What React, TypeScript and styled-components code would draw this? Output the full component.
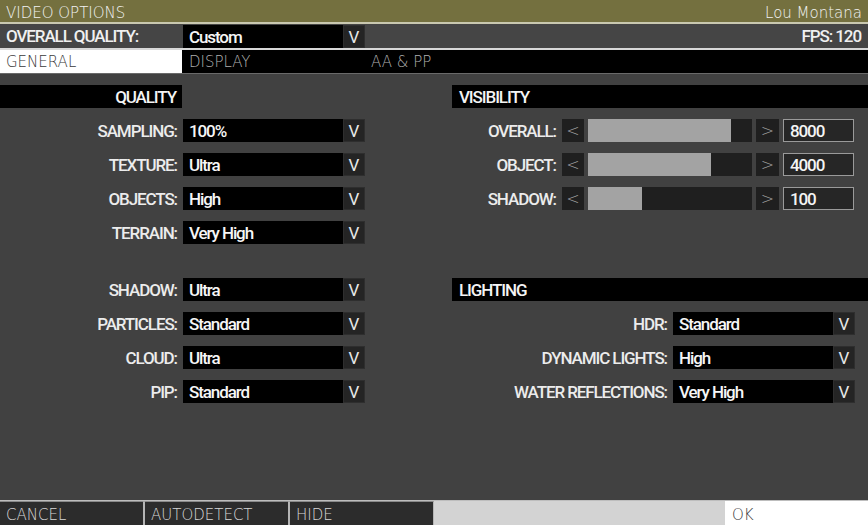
import React from "react";
import styled, { createGlobalStyle } from "styled-components";

const Global = createGlobalStyle`
  html, body { margin: 0; padding: 0; background: #404040; }
  body { font-family: "Roboto", "Liberation Sans", sans-serif; }
  * { box-sizing: border-box; }
`;

const thin = `"DejaVu Sans", "Liberation Sans", sans-serif`;
const cond = `"Roboto", "Liberation Sans", sans-serif`;

const labelFont = `
  font-family: ${cond};
  font-weight: 500;
  font-size: 17px;
  letter-spacing: -1.1px;
`;

const Screen = styled.div`
  width: 868px;
  height: 525px;
  display: flex;
  flex-direction: column;
  background: #414141;
  overflow: hidden;
`;

const TitleBar = styled.div`
  height: 24px;
  background: #74703f;
  border-bottom: 2px solid #c9c8b0;
  display: flex;
  align-items: center;
  justify-content: space-between;
  padding: 3px 6px 0 6px;
  font-family: ${thin};
  font-weight: 200;
  font-size: 15px;
  color: #f2f2f2;
`;

const QualityBar = styled.div`
  height: 26px;
  background: #454545;
  border-bottom: 2px solid #d8d8d8;
  display: flex;
  align-items: center;
`;

const BarLabel = styled.div`
  width: 183px;
  padding-left: 6px;
  ${labelFont}
  color: #f0f0f0;
`;

const Fps = styled.div`
  margin-left: auto;
  padding-right: 7px;
  ${labelFont}
  color: #f0f0f0;
`;

const Tabs = styled.div`
  height: 24px;
  background: #000;
  border-bottom: 1px solid #6a6a6a;
  display: flex;
`;

const Tab = styled.div<{ $active?: boolean; $w: number }>`
  width: ${(p) => p.$w}px;
  height: 100%;
  display: flex;
  align-items: center;
  padding: 1px 0 0 ${(p) => (p.$active ? 6 : 7)}px;
  background: ${(p) => (p.$active ? "#ffffff" : "#000000")};
  color: ${(p) => (p.$active ? "#3a3a3a" : "#b0b0b0")};
  font-family: ${thin};
  font-weight: 200;
  font-size: 15px;
`;

const Content = styled.div`
  flex: 1;
  display: flex;
  padding-top: 11px;
`;

const LeftCol = styled.div`
  width: 365px;
  display: flex;
  flex-direction: column;
`;

const RightCol = styled.div`
  margin-left: 87px;
  flex: 1;
  display: flex;
  flex-direction: column;
`;

const Section = styled.div<{ $top?: number }>`
  display: flex;
  flex-direction: column;
  gap: 11px;
  margin-top: ${(p) => p.$top ?? 0}px;
`;

const Header = styled.div<{ $align: "left" | "right"; $w?: number }>`
  height: 23px;
  width: ${(p) => (p.$w ? `${p.$w}px` : "100%")};
  background: #000;
  display: flex;
  align-items: center;
  justify-content: ${(p) => (p.$align === "right" ? "flex-end" : "flex-start")};
  padding: 1px 6px 0 7px;
  ${labelFont}
  color: #f4f4f4;
`;

const Row = styled.div<{ $labelW: number }>`
  height: 23px;
  display: grid;
  grid-template-columns: ${(p) => p.$labelW}px auto;
  column-gap: 6px;
  align-items: center;
`;

const SliderRowGrid = styled.div`
  height: 23px;
  display: grid;
  grid-template-columns: 106px 22px 164px 23px 71px;
  column-gap: 4px;
  align-items: stretch;
  & > :first-child {
    margin-right: 2px;
  }
`;

const Label = styled.div`
  text-align: right;
  align-self: center;
  padding-top: 1px;
  ${labelFont}
  color: #ececec;
  white-space: nowrap;
`;

const SelectBox = styled.div`
  width: 182px;
  height: 23px;
  display: flex;
`;

const SelectValue = styled.div`
  flex: 1;
  background: #000;
  display: flex;
  align-items: center;
  padding: 1px 0 0 6px;
  ${labelFont}
  color: #f6f6f6;
`;

const SelectArrow = styled.div`
  width: 22px;
  background: #242424;
  border: 1px solid #2e2e2e;
  display: flex;
  align-items: center;
  justify-content: center;
  padding-top: 1px;
  font-family: ${cond};
  font-weight: 400;
  font-size: 17px;
  color: #e8e8e8;
`;

const StepBtn = styled.div`
  background: #1f1f1f;
  display: flex;
  align-items: center;
  justify-content: center;
  font-family: ${thin};
  font-weight: 200;
  font-size: 16px;
  color: #a8a8a8;
`;

const Track = styled.div`
  background: #1f1f1f;
  display: flex;
`;

const Fill = styled.div`
  background: #a3a3a3;
  height: 100%;
`;

const ValueBox = styled.div`
  border: 1px solid #9a9a9a;
  background: #262626;
  display: flex;
  align-items: center;
  padding: 1px 0 0 6px;
  ${labelFont}
  color: #f4f4f4;
`;

const Footer = styled.div`
  height: 25px;
  display: flex;
  border-top: 1px solid #bdbdbd;
`;

const FootBtn = styled.div<{ $w: number; $first?: boolean }>`
  width: ${(p) => p.$w}px;
  background: #2c2c2c;
  border-left: ${(p) => (p.$first ? "none" : "1px solid #b5b5b5")};
  border-right: 1px solid #b5b5b5;
  border-top: 1px solid #8a8a8a;
  display: flex;
  align-items: center;
  padding: 3px 0 0 6px;
  font-family: ${thin};
  font-weight: 200;
  font-size: 15px;
  color: #d8d8d8;
`;

const FootFill = styled.div`
  flex: 1;
  background: #d3d3d3;
`;

const OkBtn = styled.div`
  width: 143px;
  background: #ffffff;
  display: flex;
  align-items: center;
  padding: 3px 0 0 7px;
  font-family: ${thin};
  font-weight: 200;
  font-size: 15px;
  color: #333;
`;

const Select = ({ value }: { value: string }) => (
  <SelectBox>
    <SelectValue>{value}</SelectValue>
    <SelectArrow>V</SelectArrow>
  </SelectBox>
);

const SelectRow = ({ label, value, labelW }: { label: string; value: string; labelW: number }) => (
  <Row $labelW={labelW}>
    <Label>{label}</Label>
    <Select value={value} />
  </Row>
);

const SliderRow = ({ label, pct, value }: { label: string; pct: number; value: string }) => (
  <SliderRowGrid>
    <Label>{label}</Label>
    <StepBtn>&lt;</StepBtn>
    <Track>
      <Fill style={{ width: `${pct}%` }} />
    </Track>
    <StepBtn>&gt;</StepBtn>
    <ValueBox>{value}</ValueBox>
  </SliderRowGrid>
);

export default function App() {
  return (
    <Screen>
      <Global />
      <TitleBar>
        <span>VIDEO OPTIONS</span>
        <span>Lou Montana</span>
      </TitleBar>
      <QualityBar>
        <BarLabel>OVERALL QUALITY:</BarLabel>
        <Select value="Custom" />
        <Fps>FPS: 120</Fps>
      </QualityBar>
      <Tabs>
        <Tab $active $w={182}>GENERAL</Tab>
        <Tab $w={182}>DISPLAY</Tab>
        <Tab $w={200}>AA &amp; PP</Tab>
      </Tabs>
      <Content>
        <LeftCol>
          <Section>
            <Header $align="right" $w={182}>QUALITY</Header>
            <SelectRow labelW={177} label="SAMPLING:" value="100%" />
            <SelectRow labelW={177} label="TEXTURE:" value="Ultra" />
            <SelectRow labelW={177} label="OBJECTS:" value="High" />
            <SelectRow labelW={177} label="TERRAIN:" value="Very High" />
          </Section>
          <Section $top={34}>
            <SelectRow labelW={177} label="SHADOW:" value="Ultra" />
            <SelectRow labelW={177} label="PARTICLES:" value="Standard" />
            <SelectRow labelW={177} label="CLOUD:" value="Ultra" />
            <SelectRow labelW={177} label="PIP:" value="Standard" />
          </Section>
        </LeftCol>
        <RightCol>
          <Section>
            <Header $align="left">VISIBILITY</Header>
            <SliderRow label="OVERALL:" pct={87} value="8000" />
            <SliderRow label="OBJECT:" pct={75} value="4000" />
            <SliderRow label="SHADOW:" pct={33} value="100" />
          </Section>
          <Section $top={68}>
            <Header $align="left">LIGHTING</Header>
            <SelectRow labelW={215} label="HDR:" value="Standard" />
            <SelectRow labelW={215} label="DYNAMIC LIGHTS:" value="High" />
            <SelectRow labelW={215} label="WATER REFLECTIONS:" value="Very High" />
          </Section>
        </RightCol>
      </Content>
      <Footer>
        <FootBtn $w={144} $first>CANCEL</FootBtn>
        <FootBtn $w={145}>AUTODETECT</FootBtn>
        <FootBtn $w={145}>HIDE</FootBtn>
        <FootFill />
        <OkBtn>OK</OkBtn>
      </Footer>
    </Screen>
  );
}
